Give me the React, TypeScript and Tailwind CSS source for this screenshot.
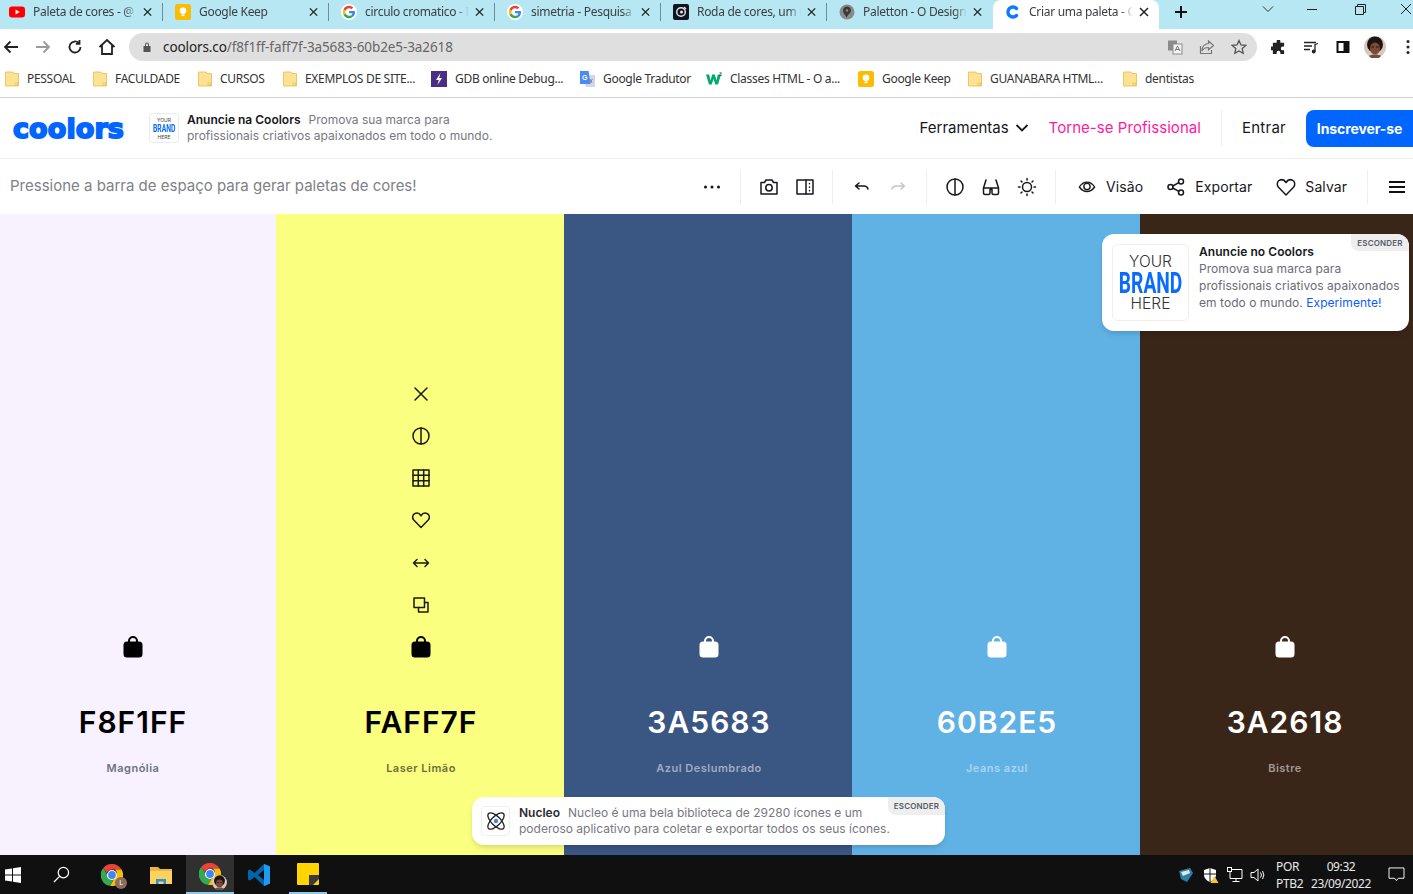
import React from "react";

type SvgP = { className?: string };
const S = ({ className = "w-5 h-5", children, sw = 1.5 }: { className?: string; children: React.ReactNode; sw?: number }) => (
  <svg viewBox="0 0 20 20" fill="none" stroke="currentColor" strokeWidth={sw} strokeLinecap="round" strokeLinejoin="round" className={className}>
    {children}
  </svg>
);

const GoogleG = ({ className = "w-4 h-4" }: SvgP) => (
  <svg viewBox="0 0 48 48" className={className}>
    <circle cx="24" cy="24" r="24" fill="#fff" />
    <path fill="#EA4335" d="M24 13c3 0 5.400 1 7.300 2.800l5.400-5.400C33.400 7.400 29.100 5.500 24 5.500c-7.300 0-13.500 4.200-16.500 10.300l6.300 4.900C15.300 16.200 19.300 13 24 13z" />
    <path fill="#4285F4" d="M42 24.500c0-1.300-.1-2.500-.3-3.700H24v7h10.100c-.4 2.300-1.700 4.300-3.700 5.600l6.100 4.700C40 34.900 42 30.100 42 24.500z" />
    <path fill="#FBBC05" d="M13.800 27.300c-.4-1.100-.6-2.200-.6-3.300s.2-2.300.6-3.300l-6.300-4.900C6.200 18.300 5.500 21 5.500 24s.7 5.700 2 8.200l6.300-4.900z" />
    <path fill="#34A853" d="M24 42.500c5 0 9.200-1.600 12.500-4.400l-6.100-4.700c-1.700 1.100-3.800 1.800-6.400 1.800-4.700 0-8.700-3.200-10.200-7.400l-6.300 4.900C10.500 38.300 16.700 42.500 24 42.500z" />
  </svg>
);

const YouTube = () => (
  <svg viewBox="0 0 16 16" className="w-4 h-4">
    <rect x="0" y="2.500" width="16" height="11" rx="3" fill="#f00" />
    <path d="M6.500 5.500v5l4.300-2.500z" fill="#fff" />
  </svg>
);
const Keep = ({ className = "w-4 h-4" }: SvgP) => (
  <svg viewBox="0 0 16 16" className={className}>
    <rect width="16" height="16" rx="2.500" fill="#fbbc04" />
    <circle cx="8" cy="6.800" r="3.300" fill="#fff" />
    <rect x="6.500" y="10.500" width="3" height="1.600" fill="#fff" />
  </svg>
);
const RodaIcon = () => (
  <svg viewBox="0 0 16 16" className="w-4 h-4">
    <rect width="16" height="16" rx="2" fill="#0f1420" />
    <circle cx="8" cy="8" r="4.300" fill="none" stroke="#e5e7eb" strokeWidth="1.400" />
    <circle cx="8.500" cy="8" r="1.500" fill="#e5e7eb" />
    <path d="M11 3l2 2" stroke="#e5e7eb" strokeWidth="1.200" />
  </svg>
);
const PalettonIcon = () => (
  <svg viewBox="0 0 16 16" className="w-4 h-4">
    <circle cx="8" cy="8" r="7.500" fill="#8a8a8a" />
    <path d="M8 2.500c-2.600 0-4 2-4 4 0 3 2.500 4.500 3.500 7 .8-1 1-2 2.500-3.500 1-1 2-2 2-3.500 0-2.400-1.800-4-4-4z" fill="#3a3a3a" />
    <circle cx="8" cy="6.500" r="1.200" fill="#8a8a8a" />
  </svg>
);
const CoolorsC = () => (
  <svg viewBox="0 0 16 16" className="w-4 h-4">
    <path d="M11.500 4.500A5 5 0 1 0 11.500 11.500" fill="none" stroke="#0b7bff" strokeWidth="3.400" strokeLinecap="round" />
  </svg>
);

const tabs = [
  { t: "Paleta de cores - @ YouTube", i: <YouTube /> },
  { t: "Google Keep", i: <Keep /> },
  { t: "circulo cromatico - Pesquisa", i: <GoogleG /> },
  { t: "simetria - Pesquisa Google", i: <GoogleG /> },
  { t: "Roda de cores, um gerador", i: <RodaIcon /> },
  { t: "Paletton - O Designer", i: <PalettonIcon /> },
];

const Tab = ({ t, i, active = false, last = false }: { t: string; i: React.ReactNode; active?: boolean; last?: boolean }) => (
  <div className={`w-[166px] h-[29px] shrink-0 flex items-center pl-[12px] pb-[5px] ${active ? "bg-white rounded-t-lg" : ""}`}>
    <span className="w-4 h-4 shrink-0">{i}</span>
    <span className="ml-[8px] w-[104px] shrink-0 overflow-hidden whitespace-nowrap text-[12px] tracking-[-.3px] text-[#3c4043] [mask-image:linear-gradient(to_right,black_88%,transparent)]">{t}</span>
    <svg viewBox="0 0 10 10" className="w-[10px] h-[10px] ml-[6px] text-[#222]" stroke="currentColor" strokeWidth="1.500">
      <path d="M1 1l8 8M9 1l-8 8" />
    </svg>
    {!active && !last && <span className="ml-[10px] h-[18px] w-px bg-[#6f8f98]" />}
    {last && <span className="ml-[10px] h-[18px] w-px bg-transparent" />}
  </div>
);

const TabBar = () => (
  <div className="h-[29px] bg-[#b6e7f3] flex items-start shrink-0 overflow-hidden">
    <div className="flex ml-[-3px]">
      {tabs.map((x, n) => (
        <Tab key={x.t} t={x.t} i={x.i} last={n === 5} />
      ))}
      <Tab t="Criar uma paleta - Coolors" i={<CoolorsC />} active />
    </div>
    <svg viewBox="0 0 14 14" className="mt-[5px] ml-[15px] w-[14px] h-[14px] text-[#111]" stroke="currentColor" strokeWidth="2">
      <path d="M7 1v12M1 7h12" />
    </svg>
    <svg viewBox="0 0 12 12" className="mt-[3px] ml-[74px] w-[12px] h-[12px] text-[#333]" stroke="currentColor" fill="none">
      <path d="M1 3.500l5 5 5-5" />
    </svg>
    <span className="mt-[9px] ml-[33px] w-[10px] h-px bg-[#222]" />
    <svg viewBox="0 0 11 11" className="mt-[4px] ml-[38px] w-[11px] h-[11px] text-[#222]" stroke="currentColor" fill="none">
      <path d="M.5 2.500h8v8h-8zM2.500 2.500v-2h8v8h-2" />
    </svg>
    <svg viewBox="0 0 12 12" className="mt-[3px] ml-[34px] w-[12px] h-[12px] shrink-0 text-[#222]" stroke="currentColor" fill="none">
      <path d="M1 1l10 10M11 1L1 11" />
    </svg>
  </div>
);

const Avatar = ({ className = "w-[22px] h-[22px]" }: SvgP) => (
  <svg viewBox="0 0 22 22" className={className}>
    <circle cx="11" cy="11" r="11" fill="#d9c7bd" />
    <circle cx="11" cy="8.500" r="8" fill="#1e1412" />
    <ellipse cx="11" cy="12.500" rx="5" ry="6" fill="#7d4a38" />
    <path d="M5 20c2-2 10-2 12 0l-2 2H7z" fill="#6d5045" />
    <rect x="7.500" y="10.500" width="2.500" height="1" fill="#20120e" />
    <rect x="12" y="10.500" width="2.500" height="1" fill="#20120e" />
  </svg>
);

const AddressBar = () => (
  <div className="h-[36px] bg-white flex items-center shrink-0 text-[#222]">
    <div className="w-[129px] shrink-0 flex items-center">
      <svg viewBox="0 0 16 16" className="ml-[3px] w-4 h-4" fill="none" stroke="currentColor" strokeWidth="1.800"><path d="M15 8H2M7.500 2.500L2 8l5.500 5.500" /></svg>
      <svg viewBox="0 0 16 16" className="ml-[16px] w-4 h-4 text-[#9a9a9a]" fill="none" stroke="currentColor" strokeWidth="1.800"><path d="M1 8h13M8.500 2.500L14 8l-5.500 5.500" /></svg>
      <svg viewBox="0 0 16 16" className="ml-[16px] w-4 h-4" fill="none" stroke="currentColor" strokeWidth="1.800"><path d="M13.500 8A5.500 5.500 0 1 1 11.800 4M12.500 1v3.800H8.800" /></svg>
      <svg viewBox="0 0 18 18" className="ml-[15px] w-[18px] h-[18px]" fill="none" stroke="currentColor" strokeWidth="1.800"><path d="M1.500 9L9 2l7.500 7M4 7.500V16h10V7.500" /></svg>
    </div>
    <div className="w-[1128px] h-[28px] bg-[#dfdfdf] rounded-full flex items-center pl-[12px] pr-[10px]">
      <svg viewBox="0 0 12 12" className="w-3 h-3 text-[#555]"><path fill="currentColor" d="M2.500 5h7v6h-7zM4 5V3.500a2 2 0 0 1 4 0V5h-1V3.500a1 1 0 0 0-2 0V5z" /></svg>
      <span className="ml-[10px] text-[13.500px] text-[#222] tracking-[-.1px]">coolors.co<span className="text-[#666]">/f8f1ff-faff7f-3a5683-60b2e5-3a2618</span></span>
      <svg viewBox="0 0 16 16" className="ml-auto w-4 h-4">
        <rect x="1" y="1.500" width="9" height="10" fill="#8b8b8b" />
        <rect x="6" y="5" width="9" height="10" fill="#f3f3f3" stroke="#8b8b8b" />
        <path d="M8 12l2.500-5 2.500 5M9 10.500h3" stroke="#777" fill="none" />
      </svg>
      <svg viewBox="0 0 16 16" className="ml-[16px] w-4 h-4 text-[#777]" fill="none" stroke="currentColor" strokeWidth="1.200"><path d="M9.500 2l5 4.500-5 4.500V8.500C6 8.500 4 10 3 12c0-4 2.500-7 6.500-7.500zM1.500 7v7.500h11V11" /></svg>
      <svg viewBox="0 0 16 16" className="ml-[16px] w-4 h-4 text-[#555]" fill="none" stroke="currentColor" strokeWidth="1.300"><path d="M8 1.500l2 4.400 4.800.5-3.600 3.200 1 4.700L8 11.900l-4.200 2.400 1-4.700L1.200 6.400 6 5.900z" /></svg>
    </div>
    <svg viewBox="0 0 16 16" className="ml-[14px] w-[15px] h-[15px] text-[#222]" fill="currentColor"><path d="M6 1.500a2 2 0 0 1 4 0V3h4v4h-1.500a2 2 0 0 0 0 4H14v4h-4v-1.500a2 2 0 0 0-4 0V15H2v-4H.5a2 2 0 0 1 0-4H2V3h4z" /></svg>
    <svg viewBox="0 0 16 16" className="ml-[17px] w-4 h-4 text-[#222]" fill="none" stroke="currentColor" strokeWidth="1.300"><path d="M1 3.500h12M1 7h8M1 10.500h6" /><path d="M12 12.500V5.500l3-1" /><circle cx="10.700" cy="12.500" r="1.300" fill="currentColor" /></svg>
    <svg viewBox="0 0 16 16" className="ml-[16px] w-4 h-4 text-[#111]"><path fill="currentColor" d="M1.500 2h13v12h-13z" /><path fill="#fff" d="M3.500 4h5v8h-5z" /></svg>
    <Avatar className="ml-[13px] w-[22px] h-[22px]" />
    <svg viewBox="0 0 4 16" className="ml-[20px] w-1 h-4 shrink-0 text-[#222]" fill="currentColor"><circle cx="2" cy="2.500" r="1.500" /><circle cx="2" cy="8" r="1.500" /><circle cx="2" cy="13.500" r="1.500" /></svg>
  </div>
);

const Folder = () => (
  <svg viewBox="0 0 14 16" className="w-[14px] h-4 shrink-0">
    <path d="M.5 1h7.500l1 1.500h4.500v12.500H.5z" fill="#fde293" stroke="#e8bd4e" strokeWidth=".8" />
    <rect x="10" y="12" width="2.500" height="2.500" fill="none" stroke="#e8bd4e" strokeWidth=".7" />
  </svg>
);
const Gdb = () => (
  <svg viewBox="0 0 16 16" className="w-4 h-4 shrink-0">
    <rect width="16" height="16" fill="#4b2e83" />
    <path d="M9.500 2L5 9h2.800L6.500 14 11 7H8.200z" fill="#fff" />
  </svg>
);
const Trad = () => (
  <svg viewBox="0 0 16 16" className="w-4 h-4 shrink-0">
    <path d="M1 0h8.500l1 4H16v12H7l-1-3H1z" fill="#cfd8e3" />
    <path d="M1 0h8.500l2 13H1z" fill="#4a8af4" />
    <text x="3" y="9" fontSize="7" fontWeight="700" fill="#fff" fontFamily="Liberation Sans">G</text>
    <path d="M11 8l2 4M13.500 8l-3 4" stroke="#7b8794" />
  </svg>
);
const W3 = () => (
  <svg viewBox="0 0 16 16" className="w-4 h-4 shrink-0">
    <path d="M0 3.500h3.200l1.300 6 1.700-6h2.600l1.700 6 1.300-6H15l-3 10H9.300L7.500 8l-1.800 5.500H3z" fill="#04aa6d" />
    <text x="13" y="5" fontSize="5" fill="#222" fontFamily="Liberation Sans">3</text>
  </svg>
);

const bookmarks: { t: string; i: React.ReactNode; w: string }[] = [
  { t: "PESSOAL", i: <Folder />, w: "w-[88px]" },
  { t: "FACULDADE", i: <Folder />, w: "w-[105px]" },
  { t: "CURSOS", i: <Folder />, w: "w-[85px]" },
  { t: "EXEMPLOS DE SITE...", i: <Folder />, w: "w-[148px]" },
  { t: "GDB online Debug...", i: <Gdb />, w: "w-[148px]" },
  { t: "Google Tradutor", i: <Trad />, w: "w-[127px]" },
  { t: "Classes HTML - O a...", i: <W3 />, w: "w-[152px]" },
  { t: "Google Keep", i: <Keep />, w: "w-[110px]" },
  { t: "GUANABARA HTML...", i: <Folder />, w: "w-[155px]" },
  { t: "dentistas", i: <Folder />, w: "w-[80px]" },
];

const Bookmarks = () => (
  <div className="h-[33px] bg-white border-b border-[#d0d0d0] flex items-center pl-[5px] pb-[4px] shrink-0">
    {bookmarks.map((b) => (
      <div key={b.t} className={`${b.w} shrink-0 flex items-center`}>
        {b.i}
        <span className="ml-[8px] text-[12px] tracking-[-.3px] text-[#333] whitespace-nowrap">{b.t}</span>
      </div>
    ))}
  </div>
);

const BrandSmall = () => (
  <div className="w-[30px] h-[30px] border border-[#eaeaea] rounded flex flex-col items-center justify-center leading-none text-[#444]">
    <span className="text-[5px] leading-[6px]">YOUR</span>
    <span className="text-[11px] leading-[11px] font-bold text-[#0b6bff] scale-x-[.62] [font-family:Roboto]">BRAND</span>
    <span className="text-[5px] leading-[6px]">HERE</span>
  </div>
);

const BrandLarge = () => (
  <div className="w-[77px] h-[77px] shrink-0 border border-[#eeeeee] rounded-md flex flex-col items-center justify-center text-[#333]">
    <span className="text-[15.500px] leading-[16px] font-light">YOUR</span>
    <span className="text-[30px] leading-[26px] font-bold text-[#0b6bff] scale-x-[.64] [font-family:Roboto]">BRAND</span>
    <span className="text-[15.500px] leading-[16px] font-light">HERE</span>
  </div>
);

const Header = () => (
  <div className="h-[61px] bg-white border-b border-[#eeeeee] flex items-center shrink-0 font-[Inter]">
    <div className="w-[149px] shrink-0 pl-[13px] flex items-center">
      <span className="text-[#0066ff] text-[27px] leading-none font-bold tracking-[.1px] [-webkit-text-stroke:1.8px_#0066ff] [font-family:'DejaVu_Sans']">coolors</span>
    </div>
    <BrandSmall />
    <div className="ml-[8px] text-[12px] leading-[16px] text-[#77777f] w-[330px]">
      <span className="font-semibold text-[#17171c]">Anuncie na Coolors</span>
      <span className="ml-[8px]">Promova sua marca para</span>
      <br />
      profissionais criativos apaixonados em todo o mundo.
    </div>
    <div className="ml-auto flex items-center">
      <span className="text-[15px] text-[#17171c]">Ferramentas</span>
      <svg viewBox="0 0 14 10" className="ml-[6px] w-[14px] h-[10px] text-[#17171c]" fill="none" stroke="currentColor" strokeWidth="1.800"><path d="M1.500 2l5.500 5.500L12.500 2" /></svg>
      <span className="ml-[20px] text-[15px] text-[#ff1a9f] tracking-[.05px]">Torne-se Profissional</span>
      <span className="ml-[20px] w-px h-[36px] bg-[#eeeeee]" />
      <span className="ml-[20px] text-[15px] text-[#17171c] tracking-[.25px]">Entrar</span>
      <span className="ml-[20px] w-[107px] h-[37px] bg-[#0066ff] rounded-l-lg flex items-center justify-center text-white text-[14px] font-bold tracking-[-.1px]">Inscrever-se</span>
    </div>
  </div>
);

const Ico = ({ children, dim = false }: { children: React.ReactNode; dim?: boolean }) => (
  <span className={`w-9 h-9 flex items-center justify-center ${dim ? "text-[#c4c4c8]" : "text-[#17171c]"}`}>{children}</span>
);

const Toolbar = () => (
  <div className="h-[55px] bg-white flex items-center shrink-0 font-[Inter]">
    <span className="ml-[10px] text-[15px] text-[#7f7f87]">Pressione a barra de espaço para gerar paletas de cores!</span>
    <div className="ml-auto flex items-center">
      <div className="w-[57px] h-[34px] border-r border-[#eeeeee] flex items-center pl-[10px]">
        <Ico>
          <svg viewBox="0 0 18 4" className="w-[18px] h-1" fill="currentColor"><circle cx="2.500" cy="2" r="1.500" /><circle cx="9" cy="2" r="1.500" /><circle cx="15.500" cy="2" r="1.500" /></svg>
        </Ico>
      </div>
      <div className="w-[92px] h-[34px] border-r border-[#eeeeee] flex items-center pl-[10px]">
        <Ico>
          <S><path d="M2 5.500h3.500L7 3h6l1.500 2.500H18v11.500H2z" /><circle cx="10" cy="10.800" r="3.200" /></S>
        </Ico>
        <Ico>
          <S><rect x="2" y="3" width="16" height="14" /><path d="M11 3v14" /><path d="M14.500 6.500v.2M14.500 10v.2M14.500 13.500v.2" /></S>
        </Ico>
      </div>
      <div className="w-[94px] h-[34px] border-r border-[#eeeeee] flex items-center pl-[11px]">
        <Ico>
          <S><path d="M7 6L3.500 9l3.500 3M3.500 9H12c2 0 3.500 1.200 4 3" /></S>
        </Ico>
        <Ico dim>
          <S><path d="M13 6l3.500 3-3.500 3M16.500 9H8c-2 0-3.500 1.200-4 3" /></S>
        </Ico>
      </div>
      <div className="w-[129px] h-[34px] border-r border-[#eeeeee] flex items-center pl-[10px]">
        <Ico>
          <S><circle cx="10" cy="10" r="8" /><path d="M10 2v16" /></S>
        </Ico>
        <Ico>
          <S><path d="M5 3L2.500 11v5a1.500 1.500 0 0 0 1.500 1.500h3.500A1.500 1.500 0 0 0 9 16v-3.500h2V16a1.500 1.500 0 0 0 1.500 1.500H16a1.500 1.500 0 0 0 1.500-1.500v-5L15 3M2.500 11h15" /></S>
        </Ico>
        <Ico>
          <S><circle cx="10" cy="10" r="4.500" /><path d="M10 1.500v1.500M10 17v1.500M1.500 10H3M17 10h1.500M4 4l1 1M15 15l1 1M4 16l1-1M15 5l1-1" /></S>
        </Ico>
      </div>
      <div className="w-[312px] h-[34px] border-r border-[#eeeeee] flex items-center pl-[22px] text-[14px] text-[#17171c] tracking-[.1px]">
        <S className="w-[18px] h-[18px]"><path d="M1.500 10C4 6 7 4.500 10 4.500S16 6 18.500 10c-2.500 3.500-5.500 5-8.500 5s-6-1.500-8.500-5z" /><circle cx="10" cy="9.500" r="3.500" /></S>
        <span className="ml-[10px]">Visão</span>
        <S className="ml-[23px] w-5 h-5"><circle cx="4.500" cy="10" r="2.500" /><circle cx="15" cy="4.500" r="2.500" /><circle cx="15" cy="15.500" r="2.500" /><path d="M6.800 9l6-3.300M6.800 11l6 3.300" /></S>
        <span className="ml-[9px]">Exportar</span>
        <S className="ml-[24px] w-5 h-5"><path d="M10 18L2.500 10.200C.5 8 1 4.500 3.500 3.200 6 2 8.500 3 10 5.500c1.500-2.500 4-3.500 6.500-2.300C19 4.500 19.500 8 17.500 10.200z" /></S>
        <span className="ml-[9px]">Salvar</span>
      </div>
      <div className="w-[45px] flex justify-end pr-[8px]">
        <svg viewBox="0 0 16 14" className="w-4 h-[14px] text-[#111]" stroke="currentColor" strokeWidth="2"><path d="M0 2h16M0 7h16M0 12h16" /></svg>
      </div>
    </div>
  </div>
);

const Lock = ({ className = "w-[20px] h-[23px]" }: SvgP) => (
  <svg viewBox="0 0 20 23" className={className} fill="currentColor">
    <path d="M5 9V6a5 5 0 0 1 10 0v3h-2V6a3 3 0 0 0-6 0v3z" />
    <rect x=".5" y="6.500" width="19" height="16" rx="3.500" />
  </svg>
);

const Tools = () => (
  <div className="flex flex-col items-center text-[#1a1a10] mb-[9px]">
    <span className="h-[42px] flex items-center"><S><path d="M4 4l12 12M16 4L4 16" /></S></span>
    <span className="h-[42px] flex items-center"><S><circle cx="10" cy="10" r="8" /><path d="M10 2v16" /></S></span>
    <span className="h-[42px] flex items-center"><S><rect x="2" y="2" width="16" height="16" /><path d="M2 7.300h16M2 12.700h16M7.300 2v16M12.700 2v16" /></S></span>
    <span className="h-[42px] flex items-center"><S><path d="M10 17.500L2.800 10C.8 7.800 1.500 4.500 4 3.500c2.400-1 4.700 0 6 2.300 1.300-2.300 3.600-3.300 6-2.300 2.500 1 3.200 4.300 1.200 6.500z" /></S></span>
    <span className="h-[43px] flex items-center"><S><path d="M2.500 10h15M6 6.500L2.500 10 6 13.500M14 6.500l3.500 3.500-3.500 3.500" /></S></span>
    <span className="h-[42px] flex items-center"><S><path d="M3 3h10.500v9.500H3z" /><path d="M13.500 7.500H17V17H7.500v-4.500" /></S></span>
  </div>
);

const cols = [
  { hex: "F8F1FF", name: "Magnólia", bg: "bg-[#f8f1ff]", fg: "text-black", sub: "text-[#6f7480]", tools: false },
  { hex: "FAFF7F", name: "Laser Limão", bg: "bg-[#faff7f]", fg: "text-black", sub: "text-[#6d6e40]", tools: true },
  { hex: "3A5683", name: "Azul Deslumbrado", bg: "bg-[#3a5683]", fg: "text-white", sub: "text-[#9eacc2]", tools: false },
  { hex: "60B2E5", name: "Jeans azul", bg: "bg-[#60b2e5]", fg: "text-white", sub: "text-[#a9d6f2]", tools: false },
  { hex: "3A2618", name: "Bistre", bg: "bg-[#3a2618]", fg: "text-white", sub: "text-[#a39a93]", tools: false },
];

const Palette = () => (
  <div className="relative flex-1 overflow-hidden font-[Inter] min-h-0">
    <div className="flex h-full w-[1440px] ml-[-12px]">
      {cols.map((c) => (
        <div key={c.hex} className={`w-[288px] shrink-0 h-full flex flex-col items-center justify-end pb-[79px] pl-[2px] ${c.bg} ${c.fg}`}>
          {c.tools && <Tools />}
          <Lock />
          <div className="mt-[44px] text-[30px] leading-[40px] font-semibold tracking-[1px]">{c.hex}</div>
          <div className={`mt-[18px] text-[11px] leading-[16px] font-semibold tracking-[.5px] ${c.sub}`}>{c.name}</div>
        </div>
      ))}
    </div>

    <div className="absolute left-[1102px] top-[20px] w-[307px] h-[97px] bg-white rounded-xl shadow-md flex p-[10px] overflow-hidden">
      <BrandLarge />
      <div className="ml-[10px] text-[12px] leading-[17px] text-[#6b6b76] tracking-[.05px]">
        <div className="font-semibold text-[#17171c] leading-[16px]">Anuncie no Coolors</div>
        <div>Promova sua marca para</div>
        <div className="whitespace-nowrap">profissionais criativos apaixonados</div>
        <div>em todo o mundo. <span className="text-[#0b5cff]">Experimente!</span></div>
      </div>
      <span className="absolute right-0 top-0 w-[58px] h-[17px] pt-[1px] bg-[#eeeeee] rounded-bl-lg flex items-center justify-center text-[8px] font-semibold text-[#555c68] tracking-[.2px]">ESCONDER</span>
    </div>

    <div className="absolute left-[472px] top-[583px] w-[473px] h-[48px] bg-white rounded-xl shadow-md flex items-center pl-[9px] overflow-hidden">
      <div className="w-[29px] h-[30px] shrink-0 border border-[#eeeeee] rounded flex items-center justify-center">
        <svg viewBox="0 0 24 24" className="w-[22px] h-[22px] text-[#222]" fill="none" stroke="currentColor" strokeWidth="1.400">
          <ellipse cx="12" cy="12" rx="5" ry="11.500" transform="rotate(45 12 12)" />
          <ellipse cx="12" cy="12" rx="5" ry="11.500" transform="rotate(-45 12 12)" />
          <circle cx="12" cy="12" r="2.400" fill="#4a80f5" stroke="none" />
        </svg>
      </div>
      <div className="ml-[9px] text-[12px] leading-[16px] text-[#77777f]">
        <span className="font-semibold text-[#2a2a30]">Nucleo</span>
        <span className="ml-[8px]">Nucleo é uma bela biblioteca de 29280 ícones e um</span>
        <br />
        poderoso aplicativo para coletar e exportar todos os seus ícones.
      </div>
      <span className="absolute right-0 top-0 w-[57px] h-[18px] bg-[#eeeeee] rounded-bl-lg flex items-center justify-center text-[8px] font-semibold text-[#555c68] tracking-[.2px]">ESCONDER</span>
    </div>
  </div>
);

const Chrome = ({ badge }: { badge: React.ReactNode }) => (
  <span className="relative w-[22px] h-[22px]">
    <svg viewBox="0 0 48 48" className="w-[22px] h-[22px]">
      <path fill="#ea4335" d="M24 0a24 24 0 0 1 20.800 12H24a12 12 0 0 0-11.300 8L5 8.500A24 24 0 0 1 24 0z" />
      <path fill="#34a853" d="M5 8.500L15.500 26a10 10 0 0 0 12 7.500L20 47.700A24 24 0 0 1 5 8.500z" />
      <path fill="#fbbc05" d="M44.800 12A24 24 0 0 1 20 47.700L31 28a10 10 0 0 0-1-16z" />
      <circle cx="24" cy="24" r="11" fill="#fff" />
      <circle cx="24" cy="24" r="8.500" fill="#4285f4" />
    </svg>
    {badge}
  </span>
);

const Taskbar = () => (
  <div className="h-[39px] bg-[#101010] flex items-center shrink-0 relative text-white font-['Noto_Sans']">
    <svg viewBox="0 0 16 16" className="ml-[5px] w-4 h-4 shrink-0" fill="#fff"><path d="M0 2.500l7-1v6H0zM8 1.300l8-1.200v7.400H8zM0 8.500h7v6l-7-1zM8 8.500h8v7.400l-8-1.200z" /></svg>
    <svg viewBox="0 0 18 18" className="ml-[32px] w-[17px] h-[17px] shrink-0" fill="none" stroke="#fff" strokeWidth="1.300"><circle cx="11" cy="7" r="5.500" /><path d="M7 11l-6 6" /></svg>
    <span className="ml-[31px] flex"><Chrome badge={<span className="absolute right-[-4px] bottom-[-3px] w-[12px] h-[12px] rounded-full bg-[#8a6d5c] text-[7px] leading-[12px] text-center">L</span>} /></span>
    <svg viewBox="0 0 22 18" className="ml-[27px] w-[22px] h-[18px] shrink-0">
      <path d="M0 1h8l2 2h12v15H0z" fill="#e9b63f" />
      <path d="M0 5h22v13H0z" fill="#fcd361" />
      <path d="M6 18v-5h10v5h-2.500v-2.500h-5V18z" fill="#2d8fd5" />
    </svg>
    <div className="ml-[14px] w-[48px] h-[39px] bg-[#303030] border-b-2 border-[#8ecae8] flex items-center justify-center shrink-0">
      <Chrome badge={<Avatar className="absolute right-[-6px] bottom-[-5px] w-[15px] h-[15px]" />} />
    </div>
    <svg viewBox="0 0 24 24" className="ml-[13px] w-[24px] h-[24px] shrink-0">
      <path fill="#0065a9" d="M17 1L7.500 10 3 6.500 1 7.500v9l2 1 4.500-3.500L17 23l6-2.500v-17zM17 7v10l-6-5z" />
      <path fill="#1f9cf0" d="M17 1l6 2.500v17L17 23z" />
    </svg>
    <div className="ml-[18px] w-[38px] h-[39px] border-b-2 border-[#8ecae8] flex items-center justify-center shrink-0">
      <svg viewBox="0 0 22 22" className="w-[22px] h-[22px]">
        <rect width="22" height="22" rx="1" fill="#ffd400" />
        <path d="M12 12h10v4l-6 6h-4z" fill="#3b3b3b" />
      </svg>
    </div>
    <div className="ml-auto flex items-center shrink-0">
      <svg viewBox="0 0 16 16" className="w-4 h-4">
        <path d="M1 4l11-3 3 5-6 9-6-3z" fill="#2b7fa8" />
        <path d="M3 5l8-2 1 3-7 3z" fill="#e2e8d8" />
      </svg>
      <svg viewBox="0 0 16 16" className="ml-[9px] w-4 h-4">
        <path d="M7 1l6 2v5c0 3-3 6-6 7-3-1-6-4-6-7V3z" fill="#fff" />
        <path d="M7 1v14M1 7h12" stroke="#101010" />
        <path d="M11.500 9l4 7h-8z" fill="#f7c331" />
      </svg>
      <svg viewBox="0 0 16 16" className="ml-[8px] w-4 h-4" fill="none" stroke="#fff"><path d="M3 2.500h12v9H3zM9 11.500v3M5.500 14.500h7" /><rect x=".5" y=".5" width="4" height="4" fill="#101010" /></svg>
      <svg viewBox="0 0 16 16" className="ml-[7px] w-4 h-4" fill="none" stroke="#fff"><path d="M1 5.500h3L8 2v12l-4-3.500H1z" /><path d="M10.500 5.500a4 4 0 0 1 0 5M12.500 4a7 7 0 0 1 0 8" /></svg>
      <div className="ml-[10px] w-[31px] text-[12px] leading-[17px] tracking-[-.3px] text-[#e8e8e8]">
        <div>POR</div>
        <div>PTB2</div>
      </div>
      <div className="w-[68px] text-[12px] leading-[17px] tracking-[-.4px] text-[#e8e8e8] text-center">
        <div>09:32</div>
        <div className="whitespace-nowrap">23/09/2022</div>
      </div>
      <svg viewBox="0 0 18 16" className="ml-[13px] mr-[8px] w-[17px] h-[15px]" fill="none" stroke="#fff"><path d="M1 1h16v11h-6l-2 2.500L7 12H1z" /></svg>
    </div>
  </div>
);

export default function App() {
  return (
    <div className="w-[1413px] h-[894px] flex flex-col overflow-hidden font-['Noto_Sans']">
      <TabBar />
      <AddressBar />
      <Bookmarks />
      <Header />
      <Toolbar />
      <Palette />
      <Taskbar />
    </div>
  );
}
